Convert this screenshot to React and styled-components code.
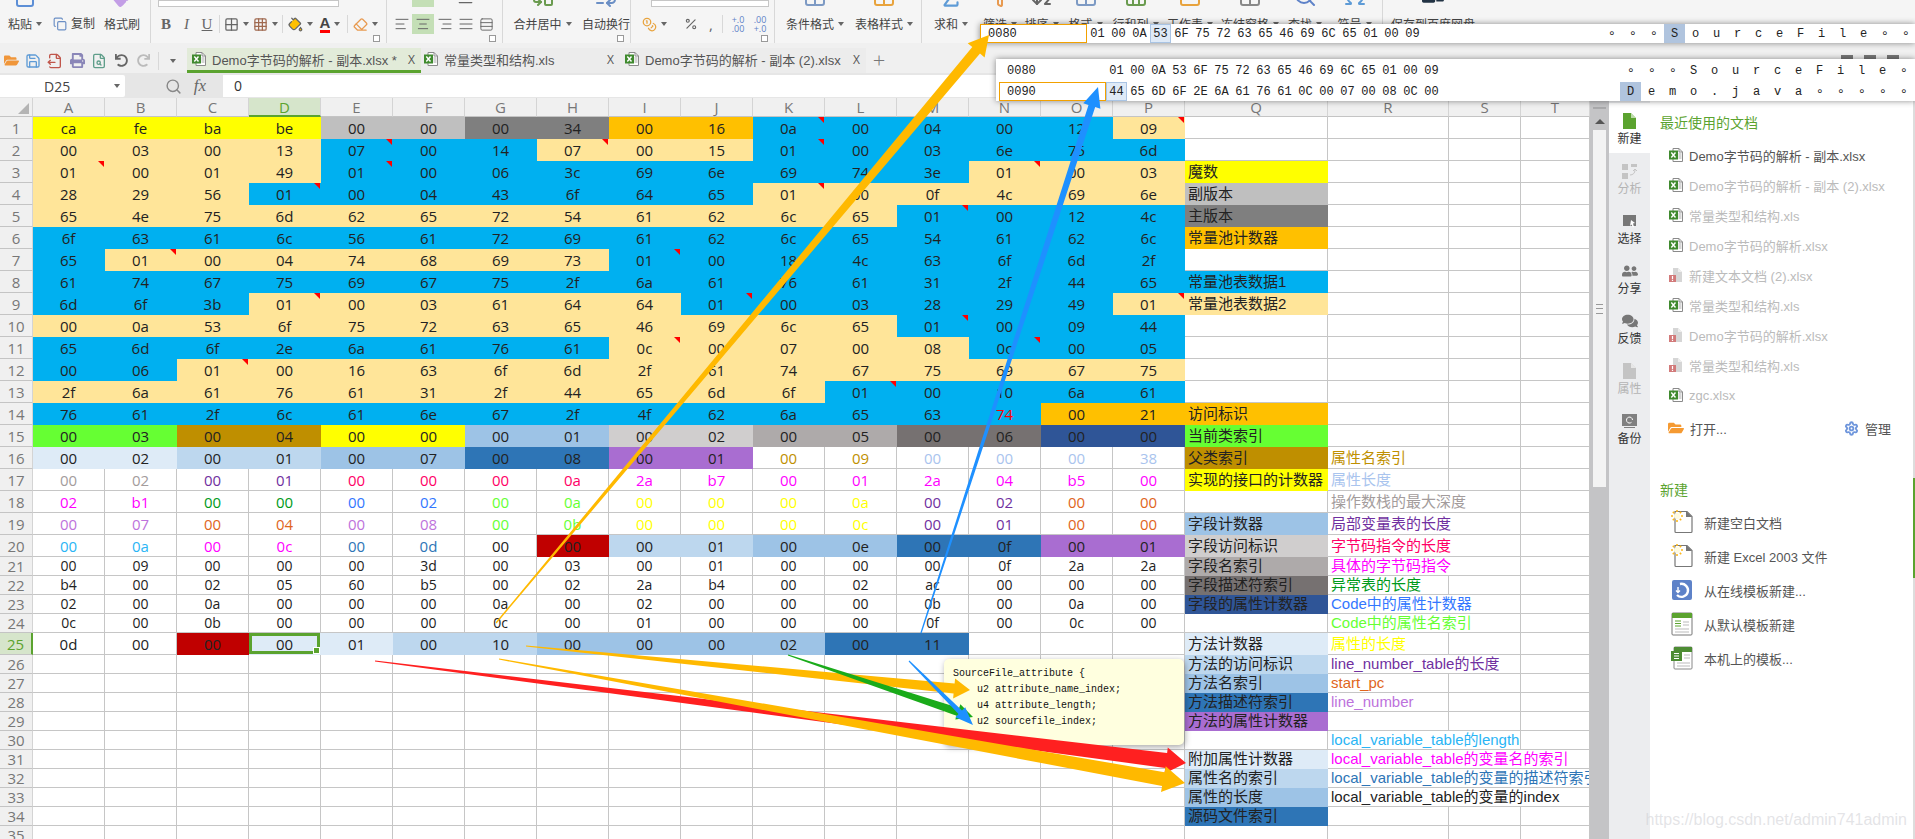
import React from 'react'
import styled, { createGlobalStyle } from 'styled-components'
import {
	AlignCenter,
	AlignJustify,
	AlignLeft,
	AlignRight,
	AlignVerticalSpaceAround,
	Columns3,
	Filter,
	Grid2x2,
	Grid3x3,
	PaintBucket,
	Percent,
	Save,
	Search,
	Settings,
	Sigma,
	Table,
	Eraser,
	Copy,
	Omega,
	ArrowDownAZ,
	Rows3,
	PanelTop,
	WrapText,
	Clipboard,
	Paintbrush,
	Combine,
	Coins,
	FileOutput,
	FileSearch,
} from 'lucide-react'
import { FaComments, FaFolderOpen, FaPrint, FaUndo, FaRedo, FaUserFriends } from 'react-icons/fa'

const FONT = '"Open Sans", "Noto Sans CJK SC", sans-serif'
const CJK = '"Noto Sans CJK SC", "Open Sans", sans-serif'
const MIXED = '"Liberation Sans", "Noto Sans CJK SC", sans-serif'
const GREEN = '#5ba32f'

const FILL = {
	Y: '#ffff00',
	S: '#bfbfbf',
	G: '#7f7f7f',
	O: '#ffc000',
	B: '#00b0f0',
	T: '#ffe599',
	L: '#66ff33',
	K: '#bf8f00',
	a: '#deebf7',
	b: '#bdd7ee',
	c: '#9dc3e6',
	d: '#2e75b6',
	e: '#d0cece',
	f: '#aeaaaa',
	g: '#767171',
	h: '#2f5597',
	p: '#a96dd1',
	r: '#c00000',
	_: null,
}

const INK = {
	k: '#222',
	o: '#c09000',
	l: '#a9c4ee',
	g: '#a39c9c',
	p: '#7030a0',
	c: '#ff0066',
	m: '#ff00ff',
	n: '#009a1a',
	u: '#3377ff',
	i: '#66ff33',
	y: '#ffff00',
	r: '#e0651c',
	v: '#bd72dc',
	s: '#2ab5f5',
	d: '#2e75b6',
	x: '#ff0000',
}

// run length strings: 'Y4 S2' is four yellow cells and two silver ones
const runs = (text) =>
	text.split(' ').flatMap((part) => Array(Number(part.slice(1))).fill(part[0]))

const ROWS = [
	['ca fe ba be 00 00 00 34 00 16 0a 00 04 00 12 09', 'Y4 S2 G2 O2 B5 T1'],
	['00 03 00 13 07 00 14 07 00 15 01 00 03 6e 75 6d', 'T4 B3 T3 B6'],
	['01 00 01 49 01 00 06 3c 69 6e 69 74 3e 01 00 03', 'T4 B9 T3'],
	['28 29 56 01 00 04 43 6f 64 65 01 00 0f 4c 69 6e', 'T3 B7 T6'],
	['65 4e 75 6d 62 65 72 54 61 62 6c 65 01 00 12 4c', 'T12 B4'],
	['6f 63 61 6c 56 61 72 69 61 62 6c 65 54 61 62 6c', 'B16'],
	['65 01 00 04 74 68 69 73 01 00 18 4c 63 6f 6d 2f', 'B1 T7 B8'],
	['61 74 67 75 69 67 75 2f 6a 61 76 61 31 2f 44 65', 'B16'],
	['6d 6f 3b 01 00 03 61 64 64 01 00 03 28 29 49 01', 'B3 T6 B6 T1'],
	['00 0a 53 6f 75 72 63 65 46 69 6c 65 01 00 09 44', 'T12 B4'],
	['65 6d 6f 2e 6a 61 76 61 0c 00 07 00 08 0c 00 05', 'B8 T5 B3'],
	['00 06 01 00 16 63 6f 6d 2f 61 74 67 75 69 67 75', 'B2 T14'],
	['2f 6a 61 76 61 31 2f 44 65 6d 6f 01 00 10 6a 61', 'T11 B5'],
	['76 61 2f 6c 61 6e 67 2f 4f 62 6a 65 63 74 00 21', 'B14 O2', 'k13 x1 k2'],
	['00 03 00 04 00 00 00 01 00 02 00 05 00 06 00 00', 'L2 K2 Y2 c2 e2 f2 g2 h2'],
	['00 02 00 01 00 07 00 08 00 01 00 09 00 00 00 38', 'a2 b2 c2 d2 p2 _6', 'k10 o2 l4'],
	['00 02 00 01 00 00 00 0a 2a b7 00 01 2a 04 b5 00', '_16', 'g2 p2 c4 m8'],
	['02 b1 00 00 00 02 00 0a 00 00 00 0a 00 02 00 00', '_16', 'm2 n2 u2 i2 y4 p2 r2'],
	['00 07 00 04 00 08 00 0b 00 00 00 0c 00 01 00 00', '_16', 'v2 r2 v2 i2 y4 p2 r2'],
	['00 0a 00 0c 00 0d 00 00 00 01 00 0e 00 0f 00 01', '_6 _1 r1 b2 c2 d2 p2', 's2 m2 d2 k10'],
	['00 09 00 00 00 3d 00 03 00 01 00 00 00 0f 2a 2a', '_16'],
	['b4 00 02 05 60 b5 00 02 2a b4 00 02 ac 00 00 00', '_16'],
	['02 00 0a 00 00 00 0a 00 02 00 00 00 0b 00 0a 00', '_16'],
	['0c 00 0b 00 00 00 0c 00 01 00 00 00 0f 00 0c 00', '_16'],
	['0d 00 00 00 01 00 10 00 00 00 02 00 11', '_2 r1 a2 b2 c4 d2'],
]

const NOTES = new Set([
	'K1', 'P1', 'E2', 'H2', 'K2', 'A3', 'E3', 'N3', 'D4', 'K4', 'M5', 'B7', 'I7',
	'D9', 'J9', 'P9', 'M10', 'I11', 'N11', 'C12', 'L13',
])

const LABELS = {
	3: { q: ['魔数', 'Y'] },
	4: { q: ['副版本', 'S'] },
	5: { q: ['主版本', 'G'] },
	6: { q: ['常量池计数器', 'O'] },
	8: { q: ['常量池表数据1', 'B'] },
	9: { q: ['常量池表数据2', 'T'] },
	14: { q: ['访问标识', 'O'] },
	15: { q: ['当前类索引', 'L'] },
	16: { q: ['父类索引', 'K'], r: ['属性名索引', 'o', 1] },
	17: { q: ['实现的接口的计数器', 'Y'], r: ['属性长度', 'l', 1] },
	18: { r: ['操作数栈的最大深度', 'g', 2] },
	19: { q: ['字段计数器', 'c'], r: ['局部变量表的长度', 'p', 2] },
	20: { q: ['字段访问标识', 'e'], r: ['字节码指令的长度', 'c', 2] },
	21: { q: ['字段名索引', 'f'], r: ['具体的字节码指令', 'm', 2] },
	22: { q: ['字段描述符索引', 'g'], r: ['异常表的长度', 'n', 1] },
	23: { q: ['字段的属性计数器', 'h'], r: ['Code中的属性计数器', 'u', 2] },
	24: { r: ['Code中的属性名索引', 'i', 2] },
	25: { q: ['方法计数器', 'a'], r: ['属性的长度', 'y', 1] },
	26: { q: ['方法的访问标识', 'b'], r: ['line_number_table的长度', 'p', 2] },
	27: { q: ['方法名索引', 'c'], r: ['start_pc', 'r', 1] },
	28: { q: ['方法描述符索引', 'd'], r: ['line_number', 'v', 1] },
	29: { q: ['方法的属性计数器', 'p'] },
	30: { r: ['local_variable_table的length', 's', 2] },
	31: { q: ['附加属性计数器', 'a'], r: ['local_variable_table的变量名的索引', 'm', 3] },
	32: { q: ['属性名的索引', 'b'], r: ['local_variable_table的变量的描述符索引', 'd', 3] },
	33: { q: ['属性的长度', 'c'], r: ['local_variable_table的变量的index', 'k', 3] },
	34: { q: ['源码文件索引', 'd'] },
}

const COLS = 'ABCDEFGHIJKLMNOPQRST'.split('')

const RECENT = [
	['xls', 'Demo字节码的解析 - 副本.xlsx', true],
	['xls', 'Demo字节码的解析 - 副本 (2).xlsx'],
	['xls', '常量类型和结构.xls'],
	['xls', 'Demo字节码的解析.xlsx'],
	['err', '新建文本文档 (2).xlsx'],
	['xls', '常量类型和结构.xls'],
	['err', 'Demo字节码的解析.xlsx'],
	['err', '常量类型和结构.xls'],
	['xls', 'zgc.xlsx'],
]

const GlobalStyle = createGlobalStyle`
	html, body {
		margin: 0;
		height: 100%;
		overflow: hidden;
		background: #fff;
	}
	#root {
		height: 100%;
	}
`

const Page = styled.div`
	position: relative;
	display: flex;
	flex-direction: column;
	width: 1915px;
	height: 839px;
	overflow: hidden;
	font-family: ${CJK};
	color: #444;
`

/* ribbon, clipped at the top as in the screenshot */
const Ribbon = styled.div`
	display: flex;
	flex: 0 0 43px;
	overflow: hidden;
	background: #f5f5f5;
`
const Group = styled.div`
	position: relative;
	display: flex;
	flex-direction: ${(p) => (p.$col ? 'column' : 'row')};
	align-items: ${(p) => (p.$col ? 'flex-start' : 'flex-end')};
	justify-content: ${(p) => (p.$col ? 'flex-end' : 'flex-start')};
	flex: 0 0 ${(p) => p.$w}px;
	box-sizing: border-box;
	padding: 0 0 9px ${(p) => p.$pad || 0}px;
	border-right: ${(p) => (p.$last ? 'none' : '1px solid #d8d8d8')};
	&::after {
		content: '';
		display: ${(p) => (p.$launcher ? 'block' : 'none')};
		position: absolute;
		right: 6px;
		bottom: 1px;
		width: 5px;
		height: 5px;
		border: 1px solid #999;
		background: #fff;
	}
`
const Tool = styled.div`
	display: flex;
	flex-direction: column;
	align-items: center;
	flex: 0 0 ${(p) => p.$w}px;
	color: ${(p) => p.$tint || '#666'};
`
const ToolIcon = styled.div`
	display: flex;
	justify-content: center;
	height: 26px;
	margin-bottom: 4px;
`
const ToolLabel = styled.div`
	display: flex;
	align-items: center;
	gap: 4px;
	height: 20px;
	font-size: 12px;
	line-height: 20px;
	color: #444;
	white-space: nowrap;
`
const Caret = styled.span`
	display: inline-block;
	width: 0;
	height: 0;
	border-left: 3px solid transparent;
	border-right: 3px solid transparent;
	border-top: 4px solid #666;
`
const InputStub = styled.div`
	width: ${(p) => p.$w}px;
	height: 20px;
	margin: 0 0 7px ${(p) => p.$left || 0}px;
	box-sizing: border-box;
	background: #fff;
	border: 1px solid #c6c6c6;
`
const IconRow = styled.div`
	display: flex;
	align-items: center;
	height: 20px;
	margin-bottom: ${(p) => p.$mb || 0}px;
`
const Btn = styled.div`
	display: flex;
	align-items: center;
	justify-content: center;
	gap: 4px;
	flex: 0 0 ${(p) => p.$w || 21}px;
	height: 20px;
	color: ${(p) => p.$tint || '#666'};
	background: ${(p) => (p.$on ? '#c4dfb6' : 'transparent')};
	font-family: ${(p) => (p.$serif ? '"Liberation Serif", serif' : FONT)};
	font-size: 15px;
	font-weight: ${(p) => (p.$bold ? 700 : 400)};
	font-style: ${(p) => (p.$italic ? 'italic' : 'normal')};
	text-decoration: ${(p) => (p.$under ? 'underline' : 'none')};
`
const MiniSep = styled.span`
	flex: 0 0 1px;
	height: 18px;
	margin: 0 ${(p) => p.$m || 3}px;
	background: #d8d8d8;
`
const SmallNum = styled.span`
	font-size: 9px;
	line-height: 9px;
	text-align: center;
	color: ${(p) => p.$tint || '#555'};
`
const FontColorA = styled.span`
	font-family: "Liberation Sans", sans-serif;
	font-size: 15px;
	line-height: 14px;
	font-weight: 700;
	color: #444;
	border-bottom: 3px solid ${(p) => p.$bar};
`

/* tab strip */
const TabStrip = styled.div`
	display: flex;
	align-items: flex-end;
	flex: 0 0 30px;
	box-sizing: border-box;
	background: #f0f0f0;
`
const QuickBar = styled.div`
	display: flex;
	align-items: center;
	flex: 0 0 187px;
	height: 25px;
`
const Quick = styled.div`
	display: flex;
	justify-content: center;
	flex: 0 0 ${(p) => p.$w || 22}px;
	color: ${(p) => p.$tint};
`
const Tab = styled.div`
	display: flex;
	align-items: center;
	flex: 0 0 ${(p) => p.$w}px;
	height: 25px;
	box-sizing: border-box;
	padding: 0 6px 0 ${(p) => p.$pad}px;
	gap: 6px;
	font-family: ${MIXED};
	font-size: 13px;
	color: #555;
	white-space: nowrap;
	background: ${(p) => (p.$active ? '#e2ebd9' : '#ececec')};
	border-bottom: 3px solid ${(p) => (p.$active ? GREEN : '#ececec')};
`
const TabName = styled.span`
	flex: 1;
`
const TabX = styled.span`
	font-family: ${FONT};
	font-size: 12px;
	color: #555;
`
const Plus = styled.div`
	flex: 0 0 26px;
	height: 25px;
	margin-left: 0;
	text-align: center;
	font: 300 22px/22px ${FONT};
	color: #777;
`
const WinIcons = styled.div`
	display: flex;
	gap: 11px;
	margin: 0 16px 6px auto;
`
const WinIcon = styled.span`
	width: 12px;
	height: 12px;
	background: #777;
`

/* formula bar */
const FormulaBar = styled.div`
	display: flex;
	align-items: stretch;
	flex: 0 0 25px;
	box-sizing: border-box;
	padding: 2px 0 1px;
	background: #e6e6e6;
`
const NameBox = styled.div`
	display: flex;
	align-items: center;
	justify-content: space-between;
	flex: 0 0 125px;
	box-sizing: border-box;
	padding: 0 5px 0 44px;
	background: #fff;
	border-radius: 0 2px 2px 0;
	font: 14px ${FONT};
	color: #444;
`
const FormulaTools = styled.div`
	display: flex;
	align-items: center;
	justify-content: flex-end;
	gap: 12px;
	flex: 0 0 98px;
	padding-right: 17px;
	box-sizing: border-box;
	color: #888;
`
const Fx = styled.span`
	font: italic 17px "Liberation Serif", serif;
	color: #666;
`
const FormulaInput = styled.div`
	flex: 1;
	padding-left: 11px;
	background: #fff;
	font: 14px/22px ${FONT};
	color: #333;
`

/* sheet and right side */
const Main = styled.div`
	display: flex;
	flex: 1;
	min-height: 0;
`
const Sheet = styled.div`
	display: grid;
	flex: 0 0 1590px;
	grid-template-columns: 33px repeat(16, 72px) 143px 121px 72px 69px;
	grid-template-rows: 19px repeat(20, 22px) repeat(4, 19px) 22px repeat(10, 19px);
	overflow: hidden;
	font-family: ${FONT};
	font-size: 15px;
	color: #222;
`
const Head = styled.div`
	display: flex;
	align-items: center;
	justify-content: center;
	box-sizing: border-box;
	background: ${(p) => (p.$on ? '#d6e5cb' : '#f0f0f0')};
	color: ${(p) => (p.$on ? GREEN : '#777')};
	border-right: ${(p) => (p.$side && p.$on ? `2px solid ${GREEN}` : '1px solid #d4d4d4')};
	border-bottom: ${(p) => (!p.$side && p.$on ? `2px solid ${GREEN}` : '1px solid #c4c4c4')};
`
const Corner = styled(Head)`
	justify-content: flex-end;
	align-items: flex-end;
	padding: 0 3px 2px 0;
`
const CornerMark = styled.span`
	width: 0;
	height: 0;
	border-left: 11px solid transparent;
	border-bottom: 11px solid #b4b4b4;
`
const Cell = styled.div`
	position: relative;
	display: flex;
	align-items: center;
	justify-content: ${(p) => (p.$left ? 'flex-start' : 'center')};
	grid-column: span ${(p) => p.$span || 1};
	box-sizing: border-box;
	padding-left: ${(p) => (p.$left ? 3 : 0)}px;
	white-space: nowrap;
	overflow: hidden;
	font-family: ${(p) => (p.$left ? MIXED : FONT)};
	font-size: ${(p) => (p.$small ? 14 : 15)}px;
	line-height: 16px;
	color: ${(p) => p.$ink || '#222'};
	background: ${(p) => p.$bg || '#fff'};
	border-right: 1px solid ${(p) => p.$bg || '#c6c6c6'};
	border-bottom: 1px solid ${(p) => p.$bg || '#c6c6c6'};
	box-shadow: ${(p) => (p.$selected ? `inset 0 0 0 3px ${GREEN}` : 'none')};
	&::before {
		content: '';
		display: ${(p) => (p.$note ? 'block' : 'none')};
		position: absolute;
		top: 0;
		right: 0;
		border-top: 6px solid #f00;
		border-left: 6px solid transparent;
	}
`
const Handle = styled.span`
	position: absolute;
	right: 0;
	bottom: 0;
	width: 5px;
	height: 5px;
	background: ${GREEN};
	border: 1px solid #fff;
	box-sizing: content-box;
`
const ScrollRail = styled.div`
	display: flex;
	flex-direction: column;
	align-items: center;
	flex: 0 0 19px;
	padding-top: 9px;
	background: #c4c4c6;
`
const RailGrip = styled.div`
	width: 13px;
	height: 2px;
	background: #a9a9ab;
`
const RailUp = styled.div`
	margin-top: 10px;
	border-left: 5px solid transparent;
	border-right: 5px solid transparent;
	border-bottom: 5px solid #555;
`
const RailThumb = styled.div`
	display: flex;
	align-items: center;
	justify-content: center;
	width: 13px;
	height: 357px;
	margin-top: 6px;
	background: #f3f3f3;
`
const ThumbLines = styled.div`
	width: 7px;
	height: 8px;
	border-top: 1px solid #999;
	border-bottom: 1px solid #999;
	background: linear-gradient(#999, #999) center / 100% 1px no-repeat;
`
const SideTabs = styled.div`
	display: flex;
	flex-direction: column;
	flex: 0 0 41px;
	box-sizing: border-box;
	padding-top: 5px;
	background: #ecedef;
`
const SideTab = styled.div`
	display: flex;
	flex-direction: column;
	align-items: center;
	flex: 0 0 50px;
	box-sizing: border-box;
	padding-top: 10px;
	background: ${(p) => (p.$active ? '#fff' : 'transparent')};
	color: ${(p) => (p.$muted ? '#bdbdbd' : '#777')};
`
const SideLabel = styled.div`
	height: 16px;
	margin-top: 1px;
	font-size: 12px;
	line-height: 16px;
	color: ${(p) => (p.$muted ? '#b4b4b4' : '#333')};
`
const Panel = styled.div`
	flex: 1;
	box-sizing: border-box;
	padding: 15px 22px 0 10px;
	background: #fff;
	font-family: ${MIXED};
	font-size: 13px;
`
const PanelRail = styled.div`
	flex: 0 0 2px;
	box-sizing: border-box;
	padding-top: 380px;
	background: #ddd;
`
const PanelRailThumb = styled.div`
	height: 100px;
	background: ${GREEN};
`
const PanelTitle = styled.div`
	height: 20px;
	margin-top: ${(p) => p.$mt || 0}px;
	font-size: 14px;
	line-height: 20px;
	color: ${GREEN};
`
const RecentList = styled.div`
	margin-top: 7px;
`
const RecentItem = styled.div`
	display: flex;
	align-items: center;
	gap: 6px;
	height: 30px;
	padding-left: 9px;
	color: ${(p) => (p.$dark ? '#555' : '#bbb')};
	white-space: nowrap;
`
const OpenRow = styled.div`
	display: flex;
	align-items: center;
	gap: 6px;
	height: 30px;
	margin-top: 3px;
	padding-left: 8px;
	color: #555;
`
const Manage = styled.div`
	display: flex;
	align-items: center;
	gap: 6px;
	margin-left: auto;
`
const NewList = styled.div`
	margin-top: 5px;
`
const NewItem = styled.div`
	display: flex;
	align-items: center;
	gap: 11px;
	height: 34px;
	padding-left: 11px;
	color: #555;
	white-space: nowrap;
`

/* things lying over the sheet */
const Popover = styled.div`
	position: absolute;
	top: ${(p) => p.$top}px;
	left: ${(p) => p.$left}px;
	right: 0;
	box-sizing: border-box;
	padding-left: ${(p) => p.$pad || 0}px;
	background: #fff;
	box-shadow: 0 0 6px rgba(0, 0, 0, 0.45);
	font: 12px "Liberation Mono", "DejaVu Sans Mono", monospace;
	color: #222;
`
const HexRow = styled.div`
	display: flex;
	align-items: center;
	height: ${(p) => p.$h}px;
`
const Address = styled.div`
	flex: 0 0 107px;
	align-self: stretch;
	display: flex;
	align-items: center;
	box-sizing: border-box;
	padding-left: 7px;
	border: 1px solid ${(p) => (p.$boxed ? '#f2a100' : 'transparent')};
`
const Bytes = styled.div`
	display: grid;
	grid-template-columns: repeat(16, 21px);
	flex: 0 0 336px;
	align-self: stretch;
`
const Ascii = styled(Bytes)`
	margin-left: 178px;
`
const Byte = styled.span`
	display: flex;
	align-items: center;
	justify-content: center;
	background: ${(p) => (p.$hit ? (p.$strong ? '#b0c4de' : '#dfeaf7') : 'transparent')};
	outline: ${(p) => (p.$hit && !p.$strong ? '1px solid #a9c4e4' : 'none')};
	outline-offset: -1px;
`
const Comment = styled.div`
	position: absolute;
	top: 659px;
	left: 944px;
	width: 240px;
	height: 86px;
	box-sizing: border-box;
	padding: 7px 9px;
	background: #ffffdf;
	border-radius: 5px;
	box-shadow: 1px 2px 6px rgba(0, 0, 0, 0.35);
	font: 10px/16px "Liberation Mono", "DejaVu Sans Mono", monospace;
	color: #111;
	white-space: pre;
`
const Overlay = styled.svg`
	position: absolute;
	top: 0;
	left: 0;
	pointer-events: none;
`
const Watermark = styled.div`
	position: absolute;
	right: 8px;
	bottom: 10px;
	font: 16px "Liberation Sans", sans-serif;
	color: rgba(205, 205, 210, 0.55);
`

const arrowPoints = ([x1, y1, x2, y2, shaft, head, len]) => {
	const dist = Math.hypot(x2 - x1, y2 - y1)
	const ux = (x2 - x1) / dist
	const uy = (y2 - y1) / dist
	const bx = x2 - ux * len
	const by = y2 - uy * len
	const side = (x, y, w) => `${(x - uy * w).toFixed(1)},${(y + ux * w).toFixed(1)}`
	return [
		side(x1, y1, 0.6),
		side(bx, by, shaft / 2),
		side(bx, by, head / 2),
		`${x2},${y2}`,
		side(bx, by, -head / 2),
		side(bx, by, -shaft / 2),
		side(x1, y1, -0.6),
	].join(' ')
}

const ARROWS = [
	['#ff2020', [375, 661, 1186, 763, 15, 26, 20]],
	['#ffb900', [499, 659, 1185, 783, 14, 26, 22]],
	['#ffb900', [526, 646, 970, 690, 10, 20, 16]],
	['#1aab1a', [788, 655, 973, 717, 8, 16, 16]],
	['#1e90ff', [909, 661, 973, 725, 5, 14, 18]],
	['#ffb900', [496, 623, 989, 35, 10, 22, 20]],
	['#1e90ff', [921, 633, 1098, 87, 7, 18, 20]],
]

const XlsIcon = ({ size = 14 }) => (
	<svg width={size} height={size} viewBox="0 0 14 14">
		<path d="M4 .5h6l3.5 3.5v9.5H4z" fill="#fff" stroke="#8a8a8a" />
		<path d="M10 .5v3.5h3.5" fill="none" stroke="#8a8a8a" />
		<path d="M9.5 6h3M9.5 8h3M9.5 10h3" stroke="#aaa" />
		<rect x="0" y="2.5" width="9" height="9" fill="#3f8a2e" />
		<path d="M2.3 4.5l4.2 5M6.5 4.5l-4.2 5" stroke="#fff" strokeWidth="1.4" />
	</svg>
)

const MissingIcon = () => (
	<svg width="14" height="14" viewBox="0 0 14 14">
		<path d="M4 0h5l4 4v10H4z" fill="#d6d6d6" />
		<path d="M9 0v4h4" fill="#eee" />
		<rect x="0" y="7" width="7" height="7" fill="#d27a7a" />
		<path d="M3.5 8v3.2M3.5 12v1" stroke="#fff" strokeWidth="1.2" />
	</svg>
)

const NewDocIcon = () => (
	<svg width="22" height="24" viewBox="0 0 22 24">
		<path d="M4 1.5h12l5 5v15a1 1 0 0 1-1 1H5a1 1 0 0 1-1-1z" fill="#fff" stroke="#777" strokeWidth="1.2" />
		<path d="M15 1l6 6h-6z" fill="#777" />
		<circle cx="6" cy="6" r="3" fill="#fffbe0" />
		<path
			d="M6 0v2M6 10v2M0 6h2M10 6h2M1.8 1.8l1.4 1.4M8.8 8.8l1.4 1.4M1.8 10.2l1.4-1.4M8.8 3.2l1.4-1.4"
			stroke="#fbb81d"
			strokeWidth="1.6"
		/>
	</svg>
)

const OnlineIcon = () => (
	<svg width="22" height="22" viewBox="0 0 22 22">
		<rect x="1" y="1" width="20" height="20" rx="2" fill="#5e82c8" />
		<path d="M9 5a6.5 6.5 0 1 1-3 11" fill="none" stroke="#fff" strokeWidth="2.4" />
		<path d="M7 8v5M5 11.5l2 2 2-2" fill="none" stroke="#fff" strokeWidth="1.4" />
	</svg>
)

const DefaultIcon = () => (
	<svg width="22" height="24" viewBox="0 0 22 24">
		<rect x="1" y="1" width="20" height="22" rx="1" fill="#fff" stroke="#777" />
		<rect x="1" y="1" width="20" height="5" fill={GREEN} />
		<path d="M4 9h6M4 11.5h6M4 14h6" stroke={GREEN} strokeWidth="1.2" />
		<path d="M12 10h6M12 13h6M4 17h14M4 20h14" stroke="#bbb" />
	</svg>
)

const LocalIcon = () => (
	<svg width="22" height="24" viewBox="0 0 22 24">
		<rect x="3" y="1" width="18" height="22" rx="1" fill="#fff" stroke="#888" />
		<rect x="3" y="1" width="18" height="5" fill="#4d8c33" />
		<rect x="0" y="5" width="11" height="10" fill="#4d8c33" />
		<path d="M3 7.5h5M3 10h5M3 12.5h5" stroke="#fff" strokeWidth="1.2" />
		<path d="M13 9h6M13 12h6M6 17h13M6 20h13" stroke="#bbb" />
	</svg>
)

const PageIcon = ({ color }) => (
	<svg width="13" height="16" viewBox="0 0 13 16">
		<path d="M0 0h8l5 5v11H0z" fill={color} />
		<path d="M8 0l5 5H8z" fill="#fff" opacity="0.6" />
	</svg>
)

const AnalyzeIcon = () => (
	<svg width="16" height="16" viewBox="0 0 16 16" fill="#c4c4c4">
		<rect x="0" y="1" width="6" height="6" />
		<rect x="0" y="10" width="6" height="6" />
		<rect x="9" y="1" width="6" height="3" />
		<path d="M8 12c3 0 5-2 5-5M11 8l2-2 2 2" fill="none" stroke="#c4c4c4" />
	</svg>
)

const SelectIcon = () => (
	<svg width="14" height="16" viewBox="0 0 14 16">
		<rect x="0" y="2" width="13" height="11" fill="#777" />
		<path d="M8 7l4 3-2 .5L11 14l-1 .5-1.5-3L7 13z" fill="#fff" />
	</svg>
)

const BackupIcon = () => (
	<svg width="16" height="16" viewBox="0 0 16 16">
		<path d="M0 1h15v12H0z" fill="#808080" />
		<path d="M2 14.5h11" stroke="#808080" />
		<path d="M10.5 7a3 3 0 1 0-1 2.3" fill="none" stroke="#fff" />
	</svg>
)

const Header = () => (
	<Ribbon>
		<Group $w={151}>
			<Tool $w={50} $tint="#5d8fd6">
				<ToolIcon>
					<Clipboard size={24} />
				</ToolIcon>
				<ToolLabel>
					粘贴
					<Caret />
				</ToolLabel>
			</Tool>
			<Btn $w={48} $tint="#6b8fc5">
				<Copy size={14} />
				<ToolLabel>复制</ToolLabel>
			</Btn>
			<Tool $w={48} $tint="#c39ee6">
				<ToolIcon>
					<Paintbrush size={24} fill="#c39ee6" />
				</ToolIcon>
				<ToolLabel>格式刷</ToolLabel>
			</Tool>
		</Group>
		<Group $w={236} $col $pad={5} $launcher>
			<InputStub $w={181} $left={2} />
			<IconRow>
				<Btn $w={20} $bold $serif>B</Btn>
				<Btn $w={21} $italic $serif>I</Btn>
				<Btn $w={20} $under $serif>U</Btn>
				<MiniSep $m={2} />
				<Btn $w={29}>
					<Grid2x2 size={15} />
					<Caret />
				</Btn>
				<Btn $w={29} $tint="#a06a50">
					<Grid3x3 size={15} />
					<Caret />
				</Btn>
				<MiniSep $m={2} />
				<Btn $w={30}>
					<PaintBucket size={15} fill="#ffc000" />
					<Caret />
				</Btn>
				<Btn $w={30}>
					<FontColorA $bar="#f00">A</FontColorA>
					<Caret />
				</Btn>
				<MiniSep $m={2} />
				<Btn $w={30} $tint="#e89a50">
					<Eraser size={15} />
					<Caret />
				</Btn>
			</IconRow>
		</Group>
		<Group $w={116} $col $pad={4} $launcher>
			<IconRow $mb={7}>
				<Btn $w={21} />
				<Btn $w={22} $on />
				<Btn $w={21} />
				<Btn $w={21}>
					<AlignVerticalSpaceAround size={15} />
				</Btn>
			</IconRow>
			<IconRow>
				<Btn $w={21}>
					<AlignLeft size={16} strokeWidth={1.5} />
				</Btn>
				<Btn $w={22} $on>
					<AlignCenter size={16} strokeWidth={1.5} />
				</Btn>
				<Btn $w={21}>
					<AlignRight size={16} strokeWidth={1.5} />
				</Btn>
				<Btn $w={21}>
					<AlignJustify size={16} strokeWidth={1.5} />
				</Btn>
				<Btn $w={21}>
					<Rows3 size={15} strokeWidth={1.5} />
				</Btn>
			</IconRow>
		</Group>
		<Group $w={123} $launcher>
			<Tool $w={79} $tint="#6a9b4f">
				<ToolIcon>
					<Combine size={24} />
				</ToolIcon>
				<ToolLabel>
					合并居中
					<Caret />
				</ToolLabel>
			</Tool>
			<Tool $w={44} $tint="#6b8fc5">
				<ToolIcon>
					<WrapText size={24} />
				</ToolIcon>
				<ToolLabel>自动换行</ToolLabel>
			</Tool>
		</Group>
		<Group $w={144} $col $launcher>
			<InputStub $w={118} $left={20} />
			<IconRow>
				<Btn $w={47} $tint="#e8a33d">
					<Coins size={15} />
					<Caret />
				</Btn>
				<Btn $w={26}>
					<Percent size={14} />
				</Btn>
				<Btn $w={14}>,</Btn>
				<MiniSep $m={4} />
				<Btn $w={22}>
					<SmallNum $tint="#5e82c8">+.0<br />.00</SmallNum>
				</Btn>
				<Btn $w={22}>
					<SmallNum $tint="#5e82c8">.00<br />+.0</SmallNum>
				</Btn>
			</IconRow>
		</Group>
		<Group $w={147}>
			<Tool $w={80} $tint="#7d9ac4">
				<ToolIcon>
					<Table size={24} />
				</ToolIcon>
				<ToolLabel>
					条件格式
					<Caret />
				</ToolLabel>
			</Tool>
			<Tool $w={54} $tint="#e8a33d">
				<ToolIcon>
					<Table size={24} />
				</ToolIcon>
				<ToolLabel>
					表格样式
					<Caret />
				</ToolLabel>
			</Tool>
		</Group>
		<Group $w={460}>
			<Tool $w={58} $tint="#5e9bd6">
				<ToolIcon>
					<Sigma size={26} />
				</ToolIcon>
				<ToolLabel>
					求和
					<Caret />
				</ToolLabel>
			</Tool>
			<Tool $w={40} $tint="#e89a50">
				<ToolIcon>
					<Filter size={24} />
				</ToolIcon>
				<ToolLabel>
					筛选
					<Caret />
				</ToolLabel>
			</Tool>
			<Tool $w={43} $tint="#666">
				<ToolIcon>
					<ArrowDownAZ size={24} />
				</ToolIcon>
				<ToolLabel>
					排序
					<Caret />
				</ToolLabel>
			</Tool>
			<Tool $w={45} $tint="#7d9ac4">
				<ToolIcon>
					<Grid2x2 size={24} />
				</ToolIcon>
				<ToolLabel>
					格式
					<Caret />
				</ToolLabel>
			</Tool>
			<Tool $w={55} $tint="#6a9b4f">
				<ToolIcon>
					<Columns3 size={24} />
				</ToolIcon>
				<ToolLabel>
					行和列
					<Caret />
				</ToolLabel>
			</Tool>
			<Tool $w={54} $tint="#e8a33d">
				<ToolIcon>
					<PanelTop size={24} />
				</ToolIcon>
				<ToolLabel>
					工作表
					<Caret />
				</ToolLabel>
			</Tool>
			<Tool $w={66} $tint="#888">
				<ToolIcon>
					<Grid2x2 size={24} />
				</ToolIcon>
				<ToolLabel>
					冻结窗格
					<Caret />
				</ToolLabel>
			</Tool>
			<Tool $w={44} $tint="#5e82c8">
				<ToolIcon>
					<Search size={24} />
				</ToolIcon>
				<ToolLabel>
					查找
					<Caret />
				</ToolLabel>
			</Tool>
			<Tool $w={55} $tint="#5e9bd6">
				<ToolIcon>
					<Omega size={24} />
				</ToolIcon>
				<ToolLabel>
					符号
					<Caret />
				</ToolLabel>
			</Tool>
		</Group>
		<Group $w={100} $last>
			<Tool $w={100} $tint="#234">
				<ToolIcon>
					<FaUserFriends size={22} />
				</ToolIcon>
				<ToolLabel>保存到百度网盘</ToolLabel>
			</Tool>
		</Group>
	</Ribbon>
)

const Tabs = () => (
	<TabStrip>
		<QuickBar>
			<Quick $tint="#f0963a">
				<FaFolderOpen size={15} />
			</Quick>
			<Quick $tint="#5e9bd6">
				<Save size={16} />
			</Quick>
			<Quick $tint="#c0564b">
				<FileOutput size={16} />
			</Quick>
			<Quick $tint="#8a86b8">
				<FaPrint size={15} />
			</Quick>
			<Quick $tint="#5f9e8a">
				<FileSearch size={16} />
			</Quick>
			<Quick $tint="#666">
				<FaUndo size={13} />
			</Quick>
			<Quick $tint="#bbb">
				<FaRedo size={13} />
			</Quick>
			<MiniSep $m={4} />
			<Quick $w={20} $tint="#666">
				<Caret />
			</Quick>
		</QuickBar>
		<Tab $w={234} $pad={5} $active>
			<XlsIcon />
			<TabName>Demo字节码的解析 - 副本.xlsx *</TabName>
			<TabX>X</TabX>
		</Tab>
		<Tab $w={199} $pad={3}>
			<XlsIcon />
			<TabName>常量类型和结构.xls</TabName>
			<TabX>X</TabX>
		</Tab>
		<Tab $w={246} $pad={5}>
			<XlsIcon />
			<TabName>Demo字节码的解析 - 副本 (2).xlsx</TabName>
			<TabX>X</TabX>
		</Tab>
		<Plus>+</Plus>
		<WinIcons>
			<WinIcon />
			<WinIcon />
			<WinIcon />
		</WinIcons>
	</TabStrip>
)

const Formula = () => (
	<FormulaBar>
		<NameBox>
			D25
			<Caret />
		</NameBox>
		<FormulaTools>
			<Search size={17} />
			<Fx>fx</Fx>
		</FormulaTools>
		<FormulaInput>0</FormulaInput>
	</FormulaBar>
)

const SheetGrid = () => (
	<Sheet>
		<Corner>
			<CornerMark />
		</Corner>
		{COLS.map((col) => (
			<Head key={col} $on={col === 'D'}>
				{col}
			</Head>
		))}
		{Array.from({ length: 35 }, (_, i) => {
			const no = i + 1
			const [values, fills, inks] = ROWS[i] || ['', '']
			const texts = values ? values.split(' ') : []
			const fillKeys = fills ? runs(fills) : []
			const inkKeys = inks ? runs(inks) : []
			const small = no >= 21 && no <= 24
			const label = LABELS[no] || {}
			const rSpan = label.r ? label.r[2] : 1
			return (
				<React.Fragment key={no}>
					<Head $side $on={no === 25}>
						{no}
					</Head>
					{COLS.slice(0, 16).map((col, c) => {
						const selected = col === 'D' && no === 25
						return (
							<Cell
								key={col}
								$bg={selected ? FILL.a : FILL[fillKeys[c]]}
								$ink={INK[inkKeys[c]]}
								$small={small}
								$note={NOTES.has(`${col}${no}`)}
								$selected={selected}>
								{texts[c]}
								{selected && <Handle />}
							</Cell>
						)
					})}
					<Cell $left $bg={label.q && FILL[label.q[1]]}>
						{label.q && label.q[0]}
					</Cell>
					<Cell $left $span={rSpan} $ink={label.r && INK[label.r[1]]}>
						{label.r && label.r[0]}
					</Cell>
					{rSpan < 2 && <Cell />}
					{rSpan < 3 && <Cell />}
				</React.Fragment>
			)
		})}
	</Sheet>
)

const TaskPane = () => (
	<>
		<ScrollRail>
			<RailGrip />
			<RailUp />
			<RailThumb>
				<ThumbLines />
			</RailThumb>
		</ScrollRail>
		<SideTabs>
			<SideTab $active>
				<PageIcon color={GREEN} />
				<SideLabel>新建</SideLabel>
			</SideTab>
			<SideTab $muted>
				<AnalyzeIcon />
				<SideLabel $muted>分析</SideLabel>
			</SideTab>
			<SideTab>
				<SelectIcon />
				<SideLabel>选择</SideLabel>
			</SideTab>
			<SideTab>
				<FaUserFriends size={16} />
				<SideLabel>分享</SideLabel>
			</SideTab>
			<SideTab>
				<FaComments size={16} />
				<SideLabel>反馈</SideLabel>
			</SideTab>
			<SideTab $muted>
				<PageIcon color="#c4c4c4" />
				<SideLabel $muted>属性</SideLabel>
			</SideTab>
			<SideTab>
				<BackupIcon />
				<SideLabel>备份</SideLabel>
			</SideTab>
		</SideTabs>
		<Panel>
			<PanelTitle>最近使用的文档</PanelTitle>
			<RecentList>
				{RECENT.map(([kind, name, dark], i) => (
					<RecentItem key={i} $dark={dark}>
						{kind === 'xls' ? <XlsIcon /> : <MissingIcon />}
						{name}
					</RecentItem>
				))}
			</RecentList>
			<OpenRow>
				<FaFolderOpen size={16} color="#f59a32" />
				打开...
				<Manage>
					<Settings size={15} color="#6f96dc" strokeWidth={3} />
					管理
				</Manage>
			</OpenRow>
			<PanelTitle $mt={37}>新建</PanelTitle>
			<NewList>
				<NewItem>
					<NewDocIcon />
					新建空白文档
				</NewItem>
				<NewItem>
					<NewDocIcon />
					新建 Excel 2003 文件
				</NewItem>
				<NewItem>
					<OnlineIcon />
					从在线模板新建...
				</NewItem>
				<NewItem>
					<DefaultIcon />
					从默认模板新建
				</NewItem>
				<NewItem>
					<LocalIcon />
					本机上的模板...
				</NewItem>
			</NewList>
		</Panel>
		<PanelRail>
			<PanelRailThumb />
		</PanelRail>
	</>
)

const HEX_TOP = '01 00 0A 53 6F 75 72 63 65 46 69 6C 65 01 00 09'.split(' ')
const HEX_BOTTOM = '44 65 6D 6F 2E 6A 61 76 61 0C 00 07 00 08 0C 00'.split(' ')
const toAscii = (hex) => {
	const code = parseInt(hex, 16)
	return code >= 32 && code < 127 ? String.fromCharCode(code) : '∘'
}

const HexLine = ({ address, bytes, hit, boxed, height }) => (
	<HexRow $h={height}>
		<Address $boxed={boxed}>{address}</Address>
		<Bytes>
			{bytes.map((b, i) => (
				<Byte key={i} $hit={i === hit}>
					{b}
				</Byte>
			))}
		</Bytes>
		<Ascii>
			{bytes.map((b, i) => (
				<Byte key={i} $hit={i === hit} $strong>
					{toAscii(b)}
				</Byte>
			))}
		</Ascii>
	</HexRow>
)

const COMMENT = `SourceFile_attribute {
    u2 attribute_name_index;
    u4 attribute_length;
    u2 sourcefile_index;
}`

const App = () => (
	<Page>
		<GlobalStyle />
		<Header />
		<Tabs />
		<Formula />
		<Main>
			<SheetGrid />
			<TaskPane />
		</Main>
		<Popover $top={24} $left={980}>
			<HexLine address="0080" bytes={HEX_TOP} hit={3} boxed height={19} />
		</Popover>
		<Popover $top={59} $left={996} $pad={3}>
			<HexLine address="0080" bytes={HEX_TOP} height={23} />
			<HexLine address="0090" bytes={HEX_BOTTOM} hit={0} boxed height={19} />
		</Popover>
		<Comment>{COMMENT}</Comment>
		<Overlay width="1915" height="839">
			{ARROWS.map(([color, arrow], i) => (
				<polygon key={i} points={arrowPoints(arrow)} fill={color} />
			))}
		</Overlay>
		<Watermark>https://blog.csdn.net/admin741admin</Watermark>
	</Page>
)

export default App
